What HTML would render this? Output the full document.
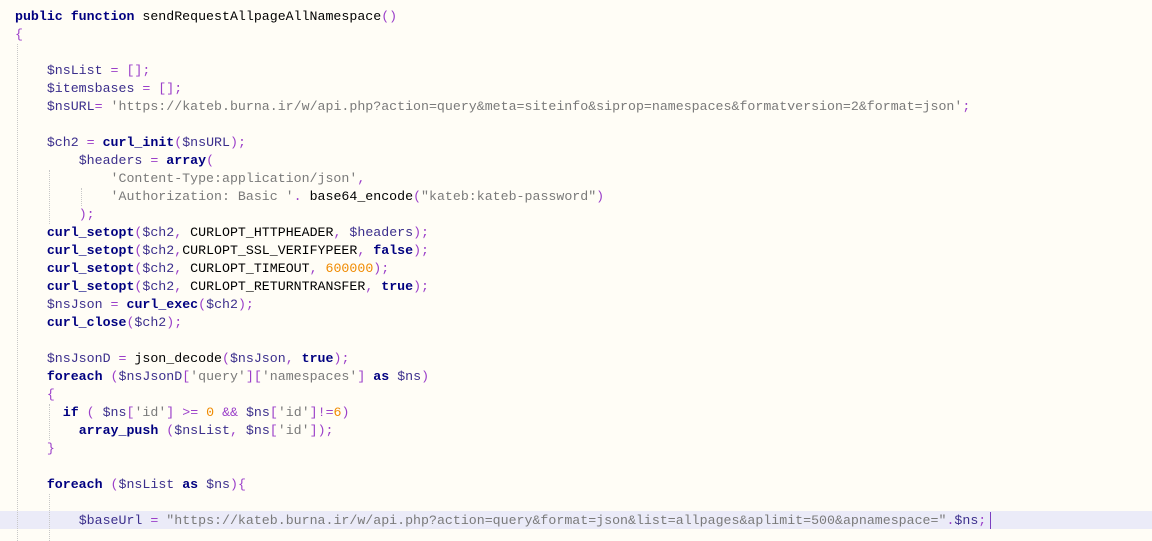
<!DOCTYPE html>
<html><head><meta charset="utf-8"><style>
html,body{margin:0;padding:0;width:1152px;height:541px;overflow:hidden;background:#fffdf6;}
.code{position:absolute;left:15px;top:8px;font-family:"Liberation Mono",monospace;font-size:13.27px;line-height:18px;color:#000;}
.l{height:18px;white-space:pre;}
.k{color:#000080;font-weight:bold}
.v{color:#3b2e8c}
.p{color:#9b3fc9}
.s{color:#7a7a7a}
.n{color:#f08a00}
.hl{position:absolute;left:0;top:511px;width:1152px;height:18px;background:#ebebf8;}
.g{position:absolute;width:0;border-left:1px dotted #c8c8c8;}
.caret{position:absolute;left:990px;top:512px;width:1px;height:17px;background:#7b3fc0;}
</style></head><body>
<div class="hl"></div>
<div class="g" style="left:17px;top:44px;height:497px"></div>
<div class="g" style="left:49px;top:170px;height:54px"></div>
<div class="g" style="left:81px;top:188px;height:18px"></div>
<div class="g" style="left:49px;top:404px;height:36px"></div>
<div class="g" style="left:49px;top:494px;height:47px"></div>
<div class="caret"></div>
<div class="code">
<div class="l"><span class="k">public function </span>sendRequestAllpageAllNamespace<span class="p">()</span></div>
<div class="l"><span class="p">{</span></div>
<div class="l"></div>
<div class="l">    <span class="v">$nsList</span> <span class="p">= [];</span></div>
<div class="l">    <span class="v">$itemsbases</span> <span class="p">= [];</span></div>
<div class="l">    <span class="v">$nsURL</span><span class="p">=</span> <span class="s">'https://kateb.burna.ir/w/api.php?action=query&amp;meta=siteinfo&amp;siprop=namespaces&amp;formatversion=2&amp;format=json'</span><span class="p">;</span></div>
<div class="l"></div>
<div class="l">    <span class="v">$ch2</span> <span class="p">=</span> <span class="k">curl_init</span><span class="p">(</span><span class="v">$nsURL</span><span class="p">);</span></div>
<div class="l">        <span class="v">$headers</span> <span class="p">=</span> <span class="k">array</span><span class="p">(</span></div>
<div class="l">            <span class="s">'Content-Type:application/json'</span><span class="p">,</span></div>
<div class="l">            <span class="s">'Authorization: Basic '</span><span class="p">.</span> base64_encode<span class="p">(</span><span class="s">"kateb:kateb-password"</span><span class="p">)</span></div>
<div class="l">        <span class="p">);</span></div>
<div class="l">    <span class="k">curl_setopt</span><span class="p">(</span><span class="v">$ch2</span><span class="p">,</span> CURLOPT_HTTPHEADER<span class="p">,</span> <span class="v">$headers</span><span class="p">);</span></div>
<div class="l">    <span class="k">curl_setopt</span><span class="p">(</span><span class="v">$ch2</span><span class="p">,</span>CURLOPT_SSL_VERIFYPEER<span class="p">,</span> <span class="k">false</span><span class="p">);</span></div>
<div class="l">    <span class="k">curl_setopt</span><span class="p">(</span><span class="v">$ch2</span><span class="p">,</span> CURLOPT_TIMEOUT<span class="p">,</span> <span class="n">600000</span><span class="p">);</span></div>
<div class="l">    <span class="k">curl_setopt</span><span class="p">(</span><span class="v">$ch2</span><span class="p">,</span> CURLOPT_RETURNTRANSFER<span class="p">,</span> <span class="k">true</span><span class="p">);</span></div>
<div class="l">    <span class="v">$nsJson</span> <span class="p">=</span> <span class="k">curl_exec</span><span class="p">(</span><span class="v">$ch2</span><span class="p">);</span></div>
<div class="l">    <span class="k">curl_close</span><span class="p">(</span><span class="v">$ch2</span><span class="p">);</span></div>
<div class="l"></div>
<div class="l">    <span class="v">$nsJsonD</span> <span class="p">=</span> json_decode<span class="p">(</span><span class="v">$nsJson</span><span class="p">,</span> <span class="k">true</span><span class="p">);</span></div>
<div class="l">    <span class="k">foreach</span> <span class="p">(</span><span class="v">$nsJsonD</span><span class="p">[</span><span class="s">'query'</span><span class="p">][</span><span class="s">'namespaces'</span><span class="p">]</span> <span class="k">as</span> <span class="v">$ns</span><span class="p">)</span></div>
<div class="l">    <span class="p">{</span></div>
<div class="l">      <span class="k">if</span> <span class="p">(</span> <span class="v">$ns</span><span class="p">[</span><span class="s">'id'</span><span class="p">]</span> <span class="p">&gt;=</span> <span class="n">0</span> <span class="p">&amp;&amp;</span> <span class="v">$ns</span><span class="p">[</span><span class="s">'id'</span><span class="p">]!=</span><span class="n">6</span><span class="p">)</span></div>
<div class="l">        <span class="k">array_push</span> <span class="p">(</span><span class="v">$nsList</span><span class="p">,</span> <span class="v">$ns</span><span class="p">[</span><span class="s">'id'</span><span class="p">]);</span></div>
<div class="l">    <span class="p">}</span></div>
<div class="l"></div>
<div class="l">    <span class="k">foreach</span> <span class="p">(</span><span class="v">$nsList</span> <span class="k">as</span> <span class="v">$ns</span><span class="p">){</span></div>
<div class="l"></div>
<div class="l">        <span class="v">$baseUrl</span> <span class="p">=</span> <span class="s">"https://kateb.burna.ir/w/api.php?action=query&amp;format=json&amp;list=allpages&amp;aplimit=500&amp;apnamespace="</span><span class="p">.</span><span class="v">$ns</span><span class="p">;</span></div>
</div>
</body></html>
